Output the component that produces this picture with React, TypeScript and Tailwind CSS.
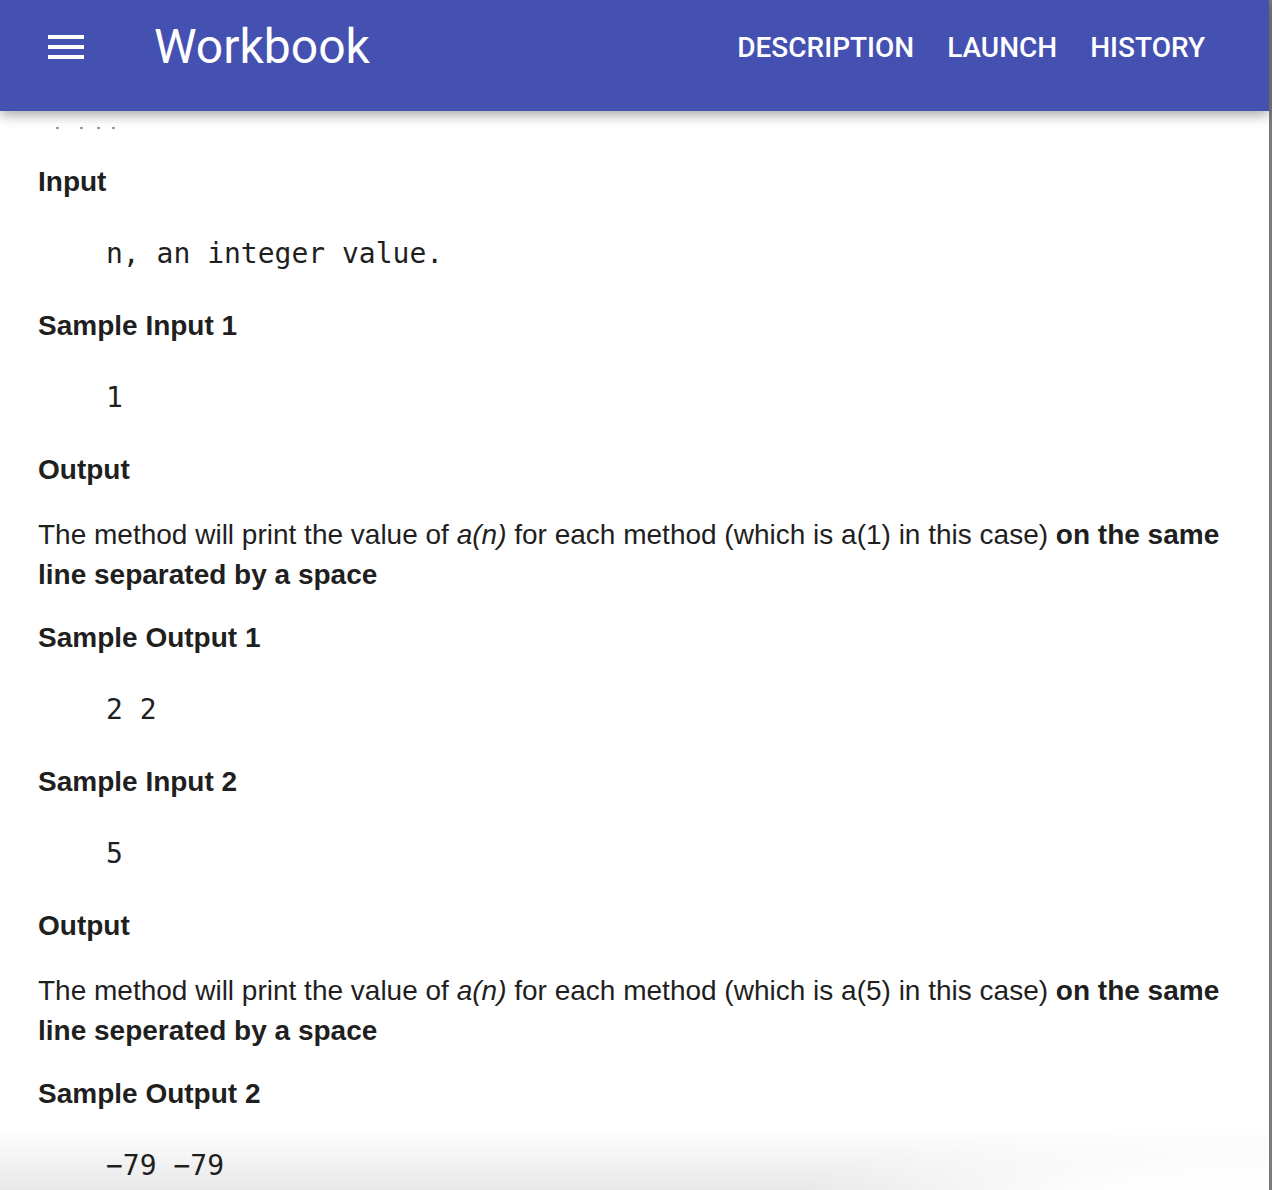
import React from "react";

const sans = "font-['Liberation_Sans',Arial,sans-serif]";
const mono = "font-['DejaVu_Sans_Mono',monospace]";

function Heading({ children }: { children: React.ReactNode }) {
  return <h3 className={`${sans} text-[28px] leading-[40px] font-bold text-[#1f1f1f]`}>{children}</h3>;
}

function Code({ children }: { children: React.ReactNode }) {
  return <pre className={`${mono} mt-[32px] mb-[32px] pl-[68px] text-[28px] leading-[40px] text-[#1f1f1f]`}>{children}</pre>;
}

function Description({ arg, sep }: { arg: string; sep: string }) {
  return (
    <p className={`${sans} mt-[25px] mb-[23px] text-[28px] leading-[40px] text-[#1f1f1f]`}>
      The method will print the value of <i>a(n)</i> for each method (which is a({arg}) in this case){" "}
      <b>on the same line {sep} by a space</b>
    </p>
  );
}

export default function App() {
  return (
    <div className="relative flex h-[1190px] w-[1272px] overflow-hidden bg-white">
      <div className="relative flex w-[1269px] flex-col">
        {/* app bar */}
        <header className="relative z-20 h-[111px] shrink-0 bg-[#4551b1] shadow-[0_4px_12px_rgba(0,0,0,0.35)]">
          <div className="flex h-[94px] items-center">
            <button className="ml-[48px] flex w-[36px] flex-col gap-[6px]">
              <span className="block h-[4px] w-full bg-white" />
              <span className="block h-[4px] w-full bg-white" />
              <span className="block h-[4px] w-full bg-white" />
            </button>
            <h1 className="ml-[70px] font-['Roboto',sans-serif] text-[48px] font-normal text-white">Workbook</h1>
            <nav className="ml-auto mr-[64px] flex gap-[33px] pt-[2px] font-['Roboto',sans-serif] text-[28px] font-medium text-white">
              <a>DESCRIPTION</a>
              <a>LAUNCH</a>
              <a>HISTORY</a>
            </nav>
          </div>
        </header>

        <main className="relative flex-1 px-[38px]">
          {/* window shadow behind the content */}
          <div className="pointer-events-none absolute bottom-0 left-0 right-0 h-[90px] bg-[linear-gradient(to_bottom,rgba(222,222,222,0),rgba(222,222,222,1))]" />
          <div className="pointer-events-none absolute bottom-0 right-0 h-[100px] w-[460px] bg-[radial-gradient(ellipse_at_100%_100%,rgba(255,255,255,1)_0%,rgba(255,255,255,0.9)_35%,rgba(255,255,255,0)_75%)]" />

          <div className="relative z-10">
            {/* bottom edge of a line scrolled under the app bar */}
            <div className="flex h-[18px] items-end">
              <span className="ml-[18px] h-[2px] w-[3px] bg-[#9a9a9a]" />
              <span className="ml-[21px] h-[2px] w-[3px] bg-[#9a9a9a]" />
              <span className="ml-[14px] h-[2px] w-[3px] bg-[#9a9a9a]" />
              <span className="ml-[12px] h-[2px] w-[3px] bg-[#9a9a9a]" />
            </div>
            <div className="pt-[33px]">
              <Heading>Input</Heading>
              <Code>n, an integer value.</Code>
              <Heading>Sample Input 1</Heading>
              <Code>1</Code>
              <Heading>Output</Heading>
              <Description arg="1" sep="separated" />
              <Heading>Sample Output 1</Heading>
              <Code>2 2</Code>
              <Heading>Sample Input 2</Heading>
              <Code>5</Code>
              <Heading>Output</Heading>
              <Description arg="5" sep="seperated" />
              <Heading>Sample Output 2</Heading>
              <Code>−79 −79</Code>
            </div>
          </div>
        </main>
      </div>
      <div className="w-[3px] bg-[#7b7b7b]" />
    </div>
  );
}
